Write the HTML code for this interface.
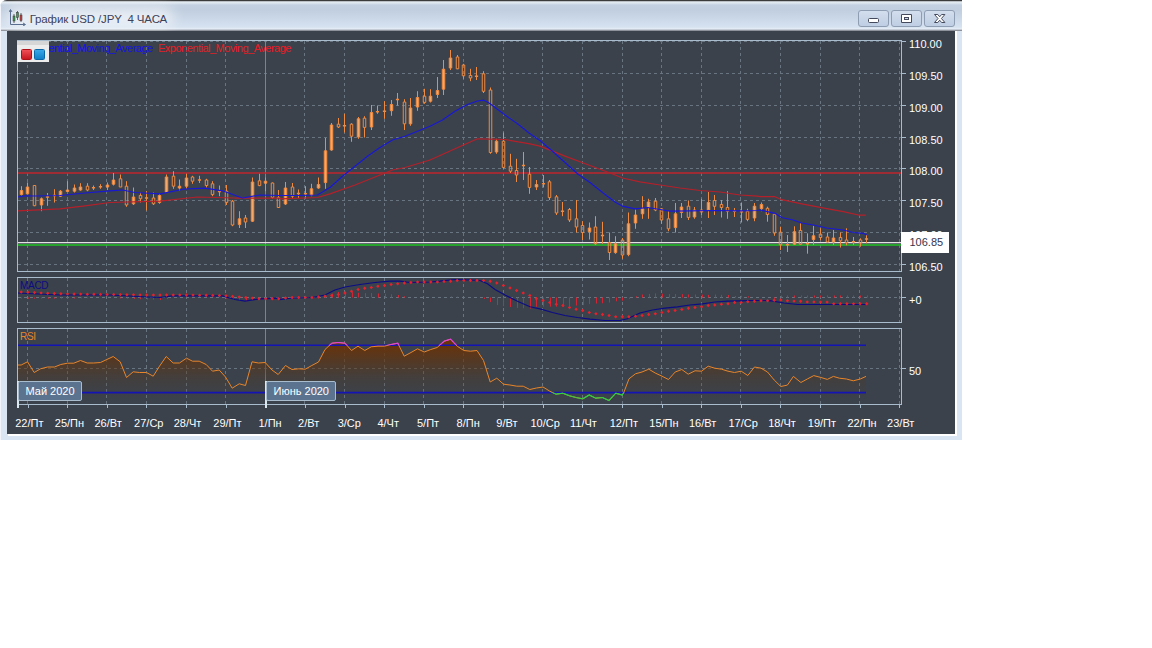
<!DOCTYPE html>
<html lang="ru"><head><meta charset="utf-8"><title>График USD/JPY</title>
<style>
html,body{margin:0;padding:0;background:#fff;}
body{width:1152px;height:648px;overflow:hidden;position:relative;font-family:"Liberation Sans",sans-serif;font-size:11px;}
.win{position:absolute;left:0;top:0;width:962px;height:439.8px;background:#d9e5f3;border-radius:7px 0 0 0;overflow:hidden;}
.tb{position:absolute;left:0;top:0;width:962px;height:31px;background:linear-gradient(#3b3b3b 0,#3b3b3b 1.2px,#e6ecf4 1.6px,#dee6ef 3px,#c3d0e1 5px,#c0cedf 10px,#cad7e7 18px,#d6e2f0 27px,#e8eff8 29.2px,#8d929b 30px,#8d929b 31px);}
.glow{position:absolute;left:6px;top:7px;width:168px;height:20px;background:#fff;opacity:0.62;filter:blur(7px);border-radius:10px;}
.edgeL{position:absolute;left:0;top:2px;width:1px;height:438px;background:#f1f5fb;}
.inner{position:absolute;left:7.5px;top:31px;width:949.7px;height:405.2px;background:#fff;}
.shl{position:absolute;left:6.7px;top:30px;width:1px;height:404px;background:#a3acb9;}
.dark{position:absolute;left:7.4px;top:31px;width:947.5px;height:402.8px;background:#3b424c;}
.title{position:absolute;left:29.7px;top:11.5px;font-size:11.5px;letter-spacing:-0.15px;line-height:14px;color:#3c4258;white-space:pre;}
.btn{position:absolute;top:10px;width:29px;height:15px;border:1px solid #8f9db3;border-radius:3px;background:linear-gradient(#d3deee,#bfcee3);box-sizing:content-box;}
.chart{position:absolute;left:0;top:0;}
.yl{position:absolute;left:909px;color:#fff;font-size:11px;line-height:14px;white-space:nowrap;}
.xl{position:absolute;top:416px;color:#fff;font-size:11px;line-height:14px;white-space:nowrap;}
.plab{position:absolute;left:901px;top:232px;width:48px;height:21px;background:#fff;color:#34344e;font-size:11px;line-height:21.6px;text-indent:8.5px;}
.mon{position:absolute;top:381px;height:18px;border:1px solid #a9bccd;border-radius:2px;background:#5c7390;color:#fff;font-size:11px;line-height:19px;padding-left:7px;box-sizing:content-box;}
.leg{position:absolute;left:16.5px;top:40.5px;width:32px;height:21.5px;background:linear-gradient(#d6d6d6 0,#d6d6d6 3.5px,#ececec 3.5px);}
.sq{position:absolute;top:8px;width:9px;height:9px;border-radius:1.5px;}
.lt{position:absolute;top:40.7px;font-size:11px;letter-spacing:-0.5px;line-height:14px;white-space:nowrap;}
.pl{position:absolute;font-size:10px;line-height:12px;letter-spacing:-0.3px;}
</style></head><body>
<div class="win">
<div class="tb"></div><div class="glow"></div><div class="edgeL"></div>
<div class="inner"></div><div class="shl"></div><div class="dark"></div>
<svg style="position:absolute;left:9px;top:9px" width="17" height="17" viewBox="0 0 17 17"><path d="M1.5 1v14.5H16M0 3l1.5-2.5L3 3M14 14l2.5 1.5L14 17" fill="none" stroke="#5a6f8f" stroke-width="1"/><path d="M5 5v9M8.5 2v9M12 4v9" stroke="#444" stroke-width="0.8"/><rect x="4" y="7" width="2" height="5" fill="#3a9a50" stroke="#333" stroke-width="0.5"/><rect x="7.5" y="3.5" width="2" height="5" fill="#3a9a50" stroke="#333" stroke-width="0.5"/><rect x="11" y="6" width="2" height="5.5" fill="#d04040" stroke="#333" stroke-width="0.5"/></svg>
<div class="title">График USD /JPY  4 ЧАСА</div>
<div class="btn" style="left:858px"></div><div class="btn" style="left:891px"></div><div class="btn" style="left:924px"></div>
<svg style="position:absolute;left:858px;top:10px" width="98" height="17" viewBox="858 10 98 17"><rect x="868.5" y="18.5" width="10" height="4" rx="1" fill="#fff" stroke="#444a5c" stroke-width="1"/><path d="M901.5 14.5h10v8h-10z" fill="#fff" stroke="#444a5c" stroke-width="1"/><rect x="904.5" y="17.5" width="4" height="2" fill="#cbd7e8" stroke="#444a5c" stroke-width="1"/><path d="M934.5 14.5h3.3l1.9 2.3 1.9-2.3h3.3l-3.5 4 3.5 4h-3.3l-1.9-2.3-1.9 2.3h-3.3l3.5-4z" fill="#fff" stroke="#444a5c" stroke-width="1" stroke-linejoin="round"/></svg>
<div class="lt" style="left:19.7px;color:#1414e0">Exponential_Moving_Average</div>
<div class="lt" style="left:158px;color:#e81c24">Exponential_Moving_Average</div>
<svg class="chart" width="962" height="440" viewBox="0 0 962 440">
<defs><linearGradient id="rg" x1="0" y1="345" x2="0" y2="404" gradientUnits="userSpaceOnUse"><stop offset="0" stop-color="#6a3208" stop-opacity="0.95"/><stop offset="0.3" stop-color="#603410" stop-opacity="0.62"/><stop offset="0.55" stop-color="#583618" stop-opacity="0.3"/><stop offset="0.8" stop-color="#50381e" stop-opacity="0.09"/><stop offset="1" stop-color="#4a3a2a" stop-opacity="0"/></linearGradient>
<clipPath id="c70"><rect x="0" y="320" width="962" height="25.2"/></clipPath><clipPath id="c30"><rect x="0" y="392.6" width="962" height="20"/></clipPath></defs>
<path d="M27.5 40.5V271.5M67.1 40.5V271.5M106.8 40.5V271.5M146.4 40.5V271.5M186.0 40.5V271.5M225.7 40.5V271.5M304.9 40.5V271.5M344.5 40.5V271.5M384.2 40.5V271.5M423.8 40.5V271.5M463.4 40.5V271.5M503.1 40.5V271.5M542.7 40.5V271.5M582.3 40.5V271.5M622.0 40.5V271.5M661.6 40.5V271.5M701.2 40.5V271.5M740.8 40.5V271.5M780.5 40.5V271.5M820.1 40.5V271.5M859.7 40.5V271.5M899.4 40.5V271.5M27.5 277.5V322.5M67.1 277.5V322.5M106.8 277.5V322.5M146.4 277.5V322.5M186.0 277.5V322.5M225.7 277.5V322.5M304.9 277.5V322.5M344.5 277.5V322.5M384.2 277.5V322.5M423.8 277.5V322.5M463.4 277.5V322.5M503.1 277.5V322.5M542.7 277.5V322.5M582.3 277.5V322.5M622.0 277.5V322.5M661.6 277.5V322.5M701.2 277.5V322.5M740.8 277.5V322.5M780.5 277.5V322.5M820.1 277.5V322.5M859.7 277.5V322.5M899.4 277.5V322.5M27.5 328.5V404.5M67.1 328.5V404.5M106.8 328.5V404.5M146.4 328.5V404.5M186.0 328.5V404.5M225.7 328.5V404.5M304.9 328.5V404.5M344.5 328.5V404.5M384.2 328.5V404.5M423.8 328.5V404.5M463.4 328.5V404.5M503.1 328.5V404.5M542.7 328.5V404.5M582.3 328.5V404.5M622.0 328.5V404.5M661.6 328.5V404.5M701.2 328.5V404.5M740.8 328.5V404.5M780.5 328.5V404.5M820.1 328.5V404.5M859.7 328.5V404.5M899.4 328.5V404.5M17.5 41.5H901.5M17.5 73.5H901.5M17.5 105.5H901.5M17.5 137.5H901.5M17.5 168.5H901.5M17.5 200.5H901.5M17.5 232.5H901.5M17.5 264.5H901.5M17.5 297.5H901.5M17.5 368.5H901.5" stroke="#68747f" stroke-width="1" stroke-dasharray="3 3" fill="none" shape-rendering="crispEdges"/>
<path d="M265.5 40.5V271.5" stroke="#6f8799" stroke-width="1" fill="none"/>
<path d="M265.5 277.5V322.5" stroke="#6f8799" stroke-width="1" fill="none"/>
<path d="M265.5 328.5V404.5" stroke="#6f8799" stroke-width="1" fill="none"/>
<polygon points="17.5,404 17.5,365.0 21.2,365.0 27.5,361.8 34.2,372.5 40.5,368.8 47.5,367.0 54.5,367.0 60.8,364.5 67.5,363.2 73.8,363.2 80.5,360.5 87.2,363.0 93.8,363.0 100.5,362.5 106.8,359.5 113.2,356.5 120.2,361.8 126.5,377.5 133.2,371.8 139.5,372.5 146.5,372.5 153.2,376.2 159.5,366.2 166.2,356.5 173.2,363.0 179.5,363.0 186.5,358.2 192.5,361.2 199.2,361.2 206.2,364.5 212.5,371.2 219.2,370.0 225.5,377.0 232.2,388.2 239.2,383.8 245.5,385.5 252.0,361.8 258.5,363.0 265.2,362.5 272.0,370.0 278.2,374.5 285.5,365.5 292.0,369.5 298.8,368.8 305.2,369.2 311.8,365.5 318.5,362.0 325.0,349.5 331.8,343.2 338.2,342.5 345.0,343.2 351.5,350.5 358.0,346.2 364.8,350.5 371.2,346.8 378.0,346.2 384.5,346.2 391.0,344.5 397.8,343.2 404.2,356.2 411.0,352.5 417.5,348.8 424.2,352.0 430.8,349.5 437.2,347.5 444.0,341.2 450.5,339.2 457.2,346.2 463.8,350.5 470.5,351.2 477.0,350.5 483.5,360.5 490.2,382.0 496.8,378.2 503.5,384.2 510.0,385.0 516.8,386.2 523.2,386.2 529.8,389.5 536.5,388.0 543.0,387.0 549.8,391.2 556.2,394.2 562.8,393.2 569.5,395.8 576.0,397.5 582.8,398.8 589.2,395.0 595.8,398.2 602.5,397.5 609.0,400.5 615.8,393.2 622.2,395.0 623.8,392.5 629.0,378.8 635.5,373.8 642.0,372.0 648.8,369.2 655.2,373.0 662.0,376.2 668.5,379.5 675.2,372.0 681.8,369.5 688.2,374.2 695.0,370.8 701.5,371.2 708.2,366.2 714.8,368.2 721.5,369.2 728.0,371.2 734.5,372.5 741.2,371.2 747.8,375.5 754.5,367.0 761.0,368.2 767.5,372.0 774.2,380.0 780.8,386.5 787.4,385.1 793.4,376.4 800.9,382.5 807.3,379.0 813.8,375.6 820.3,377.3 827.3,379.4 833.4,376.4 839.4,378.2 846.4,379.0 853.3,380.8 860.3,379.0 866.0,376.4 866.0,404" fill="url(#rg)"/>
<path d="M17.5 345.2H866M17.5 392.6H866" stroke="#1414b4" stroke-width="1.6" fill="none"/>
<polyline points="17.5,365.0 21.2,365.0 27.5,361.8 34.2,372.5 40.5,368.8 47.5,367.0 54.5,367.0 60.8,364.5 67.5,363.2 73.8,363.2 80.5,360.5 87.2,363.0 93.8,363.0 100.5,362.5 106.8,359.5 113.2,356.5 120.2,361.8 126.5,377.5 133.2,371.8 139.5,372.5 146.5,372.5 153.2,376.2 159.5,366.2 166.2,356.5 173.2,363.0 179.5,363.0 186.5,358.2 192.5,361.2 199.2,361.2 206.2,364.5 212.5,371.2 219.2,370.0 225.5,377.0 232.2,388.2 239.2,383.8 245.5,385.5 252.0,361.8 258.5,363.0 265.2,362.5 272.0,370.0 278.2,374.5 285.5,365.5 292.0,369.5 298.8,368.8 305.2,369.2 311.8,365.5 318.5,362.0 325.0,349.5 331.8,343.2 338.2,342.5 345.0,343.2 351.5,350.5 358.0,346.2 364.8,350.5 371.2,346.8 378.0,346.2 384.5,346.2 391.0,344.5 397.8,343.2 404.2,356.2 411.0,352.5 417.5,348.8 424.2,352.0 430.8,349.5 437.2,347.5 444.0,341.2 450.5,339.2 457.2,346.2 463.8,350.5 470.5,351.2 477.0,350.5 483.5,360.5 490.2,382.0 496.8,378.2 503.5,384.2 510.0,385.0 516.8,386.2 523.2,386.2 529.8,389.5 536.5,388.0 543.0,387.0 549.8,391.2 556.2,394.2 562.8,393.2 569.5,395.8 576.0,397.5 582.8,398.8 589.2,395.0 595.8,398.2 602.5,397.5 609.0,400.5 615.8,393.2 622.2,395.0 623.8,392.5 629.0,378.8 635.5,373.8 642.0,372.0 648.8,369.2 655.2,373.0 662.0,376.2 668.5,379.5 675.2,372.0 681.8,369.5 688.2,374.2 695.0,370.8 701.5,371.2 708.2,366.2 714.8,368.2 721.5,369.2 728.0,371.2 734.5,372.5 741.2,371.2 747.8,375.5 754.5,367.0 761.0,368.2 767.5,372.0 774.2,380.0 780.8,386.5 787.4,385.1 793.4,376.4 800.9,382.5 807.3,379.0 813.8,375.6 820.3,377.3 827.3,379.4 833.4,376.4 839.4,378.2 846.4,379.0 853.3,380.8 860.3,379.0 866.0,376.4" fill="none" stroke="#e8852a" stroke-width="1" stroke-linejoin="round"/>
<polyline points="17.5,365.0 21.2,365.0 27.5,361.8 34.2,372.5 40.5,368.8 47.5,367.0 54.5,367.0 60.8,364.5 67.5,363.2 73.8,363.2 80.5,360.5 87.2,363.0 93.8,363.0 100.5,362.5 106.8,359.5 113.2,356.5 120.2,361.8 126.5,377.5 133.2,371.8 139.5,372.5 146.5,372.5 153.2,376.2 159.5,366.2 166.2,356.5 173.2,363.0 179.5,363.0 186.5,358.2 192.5,361.2 199.2,361.2 206.2,364.5 212.5,371.2 219.2,370.0 225.5,377.0 232.2,388.2 239.2,383.8 245.5,385.5 252.0,361.8 258.5,363.0 265.2,362.5 272.0,370.0 278.2,374.5 285.5,365.5 292.0,369.5 298.8,368.8 305.2,369.2 311.8,365.5 318.5,362.0 325.0,349.5 331.8,343.2 338.2,342.5 345.0,343.2 351.5,350.5 358.0,346.2 364.8,350.5 371.2,346.8 378.0,346.2 384.5,346.2 391.0,344.5 397.8,343.2 404.2,356.2 411.0,352.5 417.5,348.8 424.2,352.0 430.8,349.5 437.2,347.5 444.0,341.2 450.5,339.2 457.2,346.2 463.8,350.5 470.5,351.2 477.0,350.5 483.5,360.5 490.2,382.0 496.8,378.2 503.5,384.2 510.0,385.0 516.8,386.2 523.2,386.2 529.8,389.5 536.5,388.0 543.0,387.0 549.8,391.2 556.2,394.2 562.8,393.2 569.5,395.8 576.0,397.5 582.8,398.8 589.2,395.0 595.8,398.2 602.5,397.5 609.0,400.5 615.8,393.2 622.2,395.0 623.8,392.5 629.0,378.8 635.5,373.8 642.0,372.0 648.8,369.2 655.2,373.0 662.0,376.2 668.5,379.5 675.2,372.0 681.8,369.5 688.2,374.2 695.0,370.8 701.5,371.2 708.2,366.2 714.8,368.2 721.5,369.2 728.0,371.2 734.5,372.5 741.2,371.2 747.8,375.5 754.5,367.0 761.0,368.2 767.5,372.0 774.2,380.0 780.8,386.5 787.4,385.1 793.4,376.4 800.9,382.5 807.3,379.0 813.8,375.6 820.3,377.3 827.3,379.4 833.4,376.4 839.4,378.2 846.4,379.0 853.3,380.8 860.3,379.0 866.0,376.4" fill="none" stroke="#e040e0" stroke-width="1.2" clip-path="url(#c70)"/>
<polyline points="17.5,365.0 21.2,365.0 27.5,361.8 34.2,372.5 40.5,368.8 47.5,367.0 54.5,367.0 60.8,364.5 67.5,363.2 73.8,363.2 80.5,360.5 87.2,363.0 93.8,363.0 100.5,362.5 106.8,359.5 113.2,356.5 120.2,361.8 126.5,377.5 133.2,371.8 139.5,372.5 146.5,372.5 153.2,376.2 159.5,366.2 166.2,356.5 173.2,363.0 179.5,363.0 186.5,358.2 192.5,361.2 199.2,361.2 206.2,364.5 212.5,371.2 219.2,370.0 225.5,377.0 232.2,388.2 239.2,383.8 245.5,385.5 252.0,361.8 258.5,363.0 265.2,362.5 272.0,370.0 278.2,374.5 285.5,365.5 292.0,369.5 298.8,368.8 305.2,369.2 311.8,365.5 318.5,362.0 325.0,349.5 331.8,343.2 338.2,342.5 345.0,343.2 351.5,350.5 358.0,346.2 364.8,350.5 371.2,346.8 378.0,346.2 384.5,346.2 391.0,344.5 397.8,343.2 404.2,356.2 411.0,352.5 417.5,348.8 424.2,352.0 430.8,349.5 437.2,347.5 444.0,341.2 450.5,339.2 457.2,346.2 463.8,350.5 470.5,351.2 477.0,350.5 483.5,360.5 490.2,382.0 496.8,378.2 503.5,384.2 510.0,385.0 516.8,386.2 523.2,386.2 529.8,389.5 536.5,388.0 543.0,387.0 549.8,391.2 556.2,394.2 562.8,393.2 569.5,395.8 576.0,397.5 582.8,398.8 589.2,395.0 595.8,398.2 602.5,397.5 609.0,400.5 615.8,393.2 622.2,395.0 623.8,392.5 629.0,378.8 635.5,373.8 642.0,372.0 648.8,369.2 655.2,373.0 662.0,376.2 668.5,379.5 675.2,372.0 681.8,369.5 688.2,374.2 695.0,370.8 701.5,371.2 708.2,366.2 714.8,368.2 721.5,369.2 728.0,371.2 734.5,372.5 741.2,371.2 747.8,375.5 754.5,367.0 761.0,368.2 767.5,372.0 774.2,380.0 780.8,386.5 787.4,385.1 793.4,376.4 800.9,382.5 807.3,379.0 813.8,375.6 820.3,377.3 827.3,379.4 833.4,376.4 839.4,378.2 846.4,379.0 853.3,380.8 860.3,379.0 866.0,376.4" fill="none" stroke="#30d040" stroke-width="1.2" clip-path="url(#c30)"/>
<path d="M21.5 297.5V298.7M28.5 297.5V298.7M34.5 297.5V298.7M41.5 297.5V298.7M48.5 297.5V298.7M54.5 297.5V298.7M61.5 297.5V298.7M67.5 297.5V298.6M74.5 297.5V298.5M81.5 297.5V298.4M87.5 297.5V298.3M120.5 297.5V298.4M127.5 297.5V298.7M134.5 297.5V298.9M140.5 297.5V299.2M147.5 297.5V299.5M153.5 297.5V299.7M160.5 297.5V300.0M167.5 297.5V299.1M226.5 297.5V298.5M233.5 297.5V299.9M239.5 297.5V300.8M246.5 297.5V301.1M252.5 297.5V299.4M285.5 297.5V298.3M325.5 297.5V296.2M332.5 297.5V293.7M338.5 297.5V292.0M345.5 297.5V291.5M352.5 297.5V292.2M358.5 297.5V292.8M365.5 297.5V293.1M371.5 297.5V293.0M378.5 297.5V293.5M385.5 297.5V293.7M391.5 297.5V294.3M398.5 297.5V295.0M404.5 297.5V296.3M451.5 297.5V296.3M457.5 297.5V296.6M484.5 297.5V299.0M490.5 297.5V302.1M497.5 297.5V305.0M503.5 297.5V306.2M510.5 297.5V307.0M517.5 297.5V307.9M523.5 297.5V308.3M530.5 297.5V308.6M536.5 297.5V306.8M543.5 297.5V306.7M550.5 297.5V306.7M556.5 297.5V306.7M563.5 297.5V307.0M569.5 297.5V306.2M576.5 297.5V305.5M583.5 297.5V305.2M589.5 297.5V304.1M596.5 297.5V303.5M602.5 297.5V303.3M609.5 297.5V302.5M616.5 297.5V301.3M622.5 297.5V300.7M629.5 297.5V298.9M636.5 297.5V296.3M642.5 297.5V294.5M649.5 297.5V293.9M655.5 297.5V293.4M662.5 297.5V293.7M669.5 297.5V294.1M675.5 297.5V294.0M682.5 297.5V294.2M688.5 297.5V294.5M695.5 297.5V294.5M702.5 297.5V294.6M708.5 297.5V294.9M715.5 297.5V294.5M721.5 297.5V294.9M728.5 297.5V295.0M735.5 297.5V296.0M741.5 297.5V295.7M748.5 297.5V296.3M774.5 297.5V298.7M781.5 297.5V295.5M787.5 297.5V295.5M794.5 297.5V295.5M801.5 297.5V295.5M807.5 297.5V295.5M814.5 297.5V295.5M820.5 297.5V295.5M827.5 297.5V295.5M834.5 297.5V295.5M840.5 297.5V295.5M847.5 297.5V295.5M853.5 297.5V295.5M860.5 297.5V295.5M867.5 297.5V295.5" stroke="#d42434" stroke-width="1" fill="none"/>
<polyline points="17.5,293.0 60.0,295.0 110.0,295.0 147.5,297.0 160.0,297.5 172.5,295.8 222.5,295.8 235.0,299.5 245.0,301.2 260.0,298.8 279.8,298.2 280.0,299.5 292.5,298.0 312.5,297.5 325.0,295.0 335.0,290.0 345.0,287.0 360.0,284.5 375.0,282.5 390.0,281.2 400.0,281.2 410.0,282.5 430.0,282.0 440.0,281.2 455.0,279.5 470.0,280.0 480.0,280.5 487.5,283.8 495.0,289.5 505.0,295.0 517.5,301.2 530.0,306.8 539.8,308.8 540.0,308.8 552.5,312.5 565.0,315.5 577.5,317.5 590.0,319.2 605.0,320.5 620.0,320.5 627.5,318.8 640.0,313.0 652.5,310.0 665.0,308.2 677.5,306.8 690.0,305.0 702.5,303.8 715.0,302.0 727.5,301.2 740.0,300.8 752.5,300.5 765.0,300.5 769.8,300.8 770.0,300.7 783.9,303.0 797.8,304.5 822.1,304.5 865.5,304.5" fill="none" stroke="#0c0c84" stroke-width="1.2"/>
<path d="M21.2 290.3l1.7 1.7l-1.7 1.7l-1.7 -1.7zM27.9 290.6l1.7 1.7l-1.7 1.7l-1.7 -1.7zM34.5 290.9l1.7 1.7l-1.7 1.7l-1.7 -1.7zM41.1 291.2l1.7 1.7l-1.7 1.7l-1.7 -1.7zM47.7 291.5l1.7 1.7l-1.7 1.7l-1.7 -1.7zM54.3 291.8l1.7 1.7l-1.7 1.7l-1.7 -1.7zM60.9 292.1l1.7 1.7l-1.7 1.7l-1.7 -1.7zM67.5 292.2l1.7 1.7l-1.7 1.7l-1.7 -1.7zM74.1 292.3l1.7 1.7l-1.7 1.7l-1.7 -1.7zM80.7 292.4l1.7 1.7l-1.7 1.7l-1.7 -1.7zM87.3 292.5l1.7 1.7l-1.7 1.7l-1.7 -1.7zM93.9 292.6l1.7 1.7l-1.7 1.7l-1.7 -1.7zM100.5 292.7l1.7 1.7l-1.7 1.7l-1.7 -1.7zM107.1 292.8l1.7 1.7l-1.7 1.7l-1.7 -1.7zM113.7 292.8l1.7 1.7l-1.7 1.7l-1.7 -1.7zM120.3 292.9l1.7 1.7l-1.7 1.7l-1.7 -1.7zM126.9 293.0l1.7 1.7l-1.7 1.7l-1.7 -1.7zM133.5 293.1l1.7 1.7l-1.7 1.7l-1.7 -1.7zM140.1 293.2l1.7 1.7l-1.7 1.7l-1.7 -1.7zM146.7 293.3l1.7 1.7l-1.7 1.7l-1.7 -1.7zM153.4 293.3l1.7 1.7l-1.7 1.7l-1.7 -1.7zM160.0 293.3l1.7 1.7l-1.7 1.7l-1.7 -1.7zM166.6 293.3l1.7 1.7l-1.7 1.7l-1.7 -1.7zM173.2 293.3l1.7 1.7l-1.7 1.7l-1.7 -1.7zM179.8 293.3l1.7 1.7l-1.7 1.7l-1.7 -1.7zM186.4 293.3l1.7 1.7l-1.7 1.7l-1.7 -1.7zM193.0 293.4l1.7 1.7l-1.7 1.7l-1.7 -1.7zM199.6 293.5l1.7 1.7l-1.7 1.7l-1.7 -1.7zM206.2 293.6l1.7 1.7l-1.7 1.7l-1.7 -1.7zM212.8 293.7l1.7 1.7l-1.7 1.7l-1.7 -1.7zM219.4 293.8l1.7 1.7l-1.7 1.7l-1.7 -1.7zM226.0 294.1l1.7 1.7l-1.7 1.7l-1.7 -1.7zM232.6 294.7l1.7 1.7l-1.7 1.7l-1.7 -1.7zM239.2 295.2l1.7 1.7l-1.7 1.7l-1.7 -1.7zM245.8 295.8l1.7 1.7l-1.7 1.7l-1.7 -1.7zM252.4 296.4l1.7 1.7l-1.7 1.7l-1.7 -1.7zM259.0 297.0l1.7 1.7l-1.7 1.7l-1.7 -1.7zM265.6 297.1l1.7 1.7l-1.7 1.7l-1.7 -1.7zM272.2 297.1l1.7 1.7l-1.7 1.7l-1.7 -1.7zM278.8 297.1l1.7 1.7l-1.7 1.7l-1.7 -1.7zM285.5 296.3l1.7 1.7l-1.7 1.7l-1.7 -1.7zM292.1 295.8l1.7 1.7l-1.7 1.7l-1.7 -1.7zM298.7 295.8l1.7 1.7l-1.7 1.7l-1.7 -1.7zM305.3 295.8l1.7 1.7l-1.7 1.7l-1.7 -1.7zM311.9 295.8l1.7 1.7l-1.7 1.7l-1.7 -1.7zM318.5 295.3l1.7 1.7l-1.7 1.7l-1.7 -1.7zM325.1 294.5l1.7 1.7l-1.7 1.7l-1.7 -1.7zM331.7 293.8l1.7 1.7l-1.7 1.7l-1.7 -1.7zM338.3 292.8l1.7 1.7l-1.7 1.7l-1.7 -1.7zM344.9 291.3l1.7 1.7l-1.7 1.7l-1.7 -1.7zM351.5 289.6l1.7 1.7l-1.7 1.7l-1.7 -1.7zM358.1 287.8l1.7 1.7l-1.7 1.7l-1.7 -1.7zM364.7 286.6l1.7 1.7l-1.7 1.7l-1.7 -1.7zM371.3 285.8l1.7 1.7l-1.7 1.7l-1.7 -1.7zM377.9 284.6l1.7 1.7l-1.7 1.7l-1.7 -1.7zM384.5 283.8l1.7 1.7l-1.7 1.7l-1.7 -1.7zM391.1 282.8l1.7 1.7l-1.7 1.7l-1.7 -1.7zM397.7 282.1l1.7 1.7l-1.7 1.7l-1.7 -1.7zM404.3 281.3l1.7 1.7l-1.7 1.7l-1.7 -1.7zM410.9 280.8l1.7 1.7l-1.7 1.7l-1.7 -1.7zM417.6 280.3l1.7 1.7l-1.7 1.7l-1.7 -1.7zM424.2 280.3l1.7 1.7l-1.7 1.7l-1.7 -1.7zM430.8 280.3l1.7 1.7l-1.7 1.7l-1.7 -1.7zM437.4 280.3l1.7 1.7l-1.7 1.7l-1.7 -1.7zM444.0 279.8l1.7 1.7l-1.7 1.7l-1.7 -1.7zM450.6 279.5l1.7 1.7l-1.7 1.7l-1.7 -1.7zM457.2 278.8l1.7 1.7l-1.7 1.7l-1.7 -1.7zM463.8 278.8l1.7 1.7l-1.7 1.7l-1.7 -1.7zM470.4 278.8l1.7 1.7l-1.7 1.7l-1.7 -1.7zM477.0 278.8l1.7 1.7l-1.7 1.7l-1.7 -1.7zM483.6 278.8l1.7 1.7l-1.7 1.7l-1.7 -1.7zM490.2 279.5l1.7 1.7l-1.7 1.7l-1.7 -1.7zM496.8 281.3l1.7 1.7l-1.7 1.7l-1.7 -1.7zM503.4 283.8l1.7 1.7l-1.7 1.7l-1.7 -1.7zM510.0 286.3l1.7 1.7l-1.7 1.7l-1.7 -1.7zM516.6 288.8l1.7 1.7l-1.7 1.7l-1.7 -1.7zM523.2 291.3l1.7 1.7l-1.7 1.7l-1.7 -1.7zM529.8 293.8l1.7 1.7l-1.7 1.7l-1.7 -1.7zM536.4 297.0l1.7 1.7l-1.7 1.7l-1.7 -1.7zM543.0 298.8l1.7 1.7l-1.7 1.7l-1.7 -1.7zM549.7 300.8l1.7 1.7l-1.7 1.7l-1.7 -1.7zM556.3 302.6l1.7 1.7l-1.7 1.7l-1.7 -1.7zM562.9 303.8l1.7 1.7l-1.7 1.7l-1.7 -1.7zM569.5 305.8l1.7 1.7l-1.7 1.7l-1.7 -1.7zM576.1 307.6l1.7 1.7l-1.7 1.7l-1.7 -1.7zM582.7 308.8l1.7 1.7l-1.7 1.7l-1.7 -1.7zM589.3 310.8l1.7 1.7l-1.7 1.7l-1.7 -1.7zM595.9 312.1l1.7 1.7l-1.7 1.7l-1.7 -1.7zM602.5 312.8l1.7 1.7l-1.7 1.7l-1.7 -1.7zM609.1 313.8l1.7 1.7l-1.7 1.7l-1.7 -1.7zM615.7 315.0l1.7 1.7l-1.7 1.7l-1.7 -1.7zM622.3 315.1l1.7 1.7l-1.7 1.7l-1.7 -1.7zM628.9 315.1l1.7 1.7l-1.7 1.7l-1.7 -1.7zM635.5 314.5l1.7 1.7l-1.7 1.7l-1.7 -1.7zM642.1 313.8l1.7 1.7l-1.7 1.7l-1.7 -1.7zM648.7 312.8l1.7 1.7l-1.7 1.7l-1.7 -1.7zM655.3 312.0l1.7 1.7l-1.7 1.7l-1.7 -1.7zM661.9 310.8l1.7 1.7l-1.7 1.7l-1.7 -1.7zM668.5 309.5l1.7 1.7l-1.7 1.7l-1.7 -1.7zM675.1 308.8l1.7 1.7l-1.7 1.7l-1.7 -1.7zM681.8 307.8l1.7 1.7l-1.7 1.7l-1.7 -1.7zM688.4 306.5l1.7 1.7l-1.7 1.7l-1.7 -1.7zM695.0 305.8l1.7 1.7l-1.7 1.7l-1.7 -1.7zM701.6 305.0l1.7 1.7l-1.7 1.7l-1.7 -1.7zM708.2 303.8l1.7 1.7l-1.7 1.7l-1.7 -1.7zM714.8 303.3l1.7 1.7l-1.7 1.7l-1.7 -1.7zM721.4 302.6l1.7 1.7l-1.7 1.7l-1.7 -1.7zM728.0 302.1l1.7 1.7l-1.7 1.7l-1.7 -1.7zM734.6 300.8l1.7 1.7l-1.7 1.7l-1.7 -1.7zM741.2 300.8l1.7 1.7l-1.7 1.7l-1.7 -1.7zM747.8 300.0l1.7 1.7l-1.7 1.7l-1.7 -1.7zM754.4 299.6l1.7 1.7l-1.7 1.7l-1.7 -1.7zM761.0 299.1l1.7 1.7l-1.7 1.7l-1.7 -1.7zM767.6 299.0l1.7 1.7l-1.7 1.7l-1.7 -1.7zM774.2 298.6l1.7 1.7l-1.7 1.7l-1.7 -1.7zM780.8 298.2l1.7 1.7l-1.7 1.7l-1.7 -1.7zM787.4 299.0l1.7 1.7l-1.7 1.7l-1.7 -1.7zM794.0 299.4l1.7 1.7l-1.7 1.7l-1.7 -1.7zM800.6 299.5l1.7 1.7l-1.7 1.7l-1.7 -1.7zM807.2 300.2l1.7 1.7l-1.7 1.7l-1.7 -1.7zM813.9 300.2l1.7 1.7l-1.7 1.7l-1.7 -1.7zM820.5 300.4l1.7 1.7l-1.7 1.7l-1.7 -1.7zM827.1 300.4l1.7 1.7l-1.7 1.7l-1.7 -1.7zM833.7 302.0l1.7 1.7l-1.7 1.7l-1.7 -1.7zM840.3 302.0l1.7 1.7l-1.7 1.7l-1.7 -1.7zM846.9 302.0l1.7 1.7l-1.7 1.7l-1.7 -1.7zM853.5 302.0l1.7 1.7l-1.7 1.7l-1.7 -1.7zM860.1 302.0l1.7 1.7l-1.7 1.7l-1.7 -1.7zM866.7 302.0l1.7 1.7l-1.7 1.7l-1.7 -1.7z" fill="#e8202c"/>
<path d="M17.5 173H901.5" stroke="#bf262e" stroke-width="1.4" fill="none"/>
<path d="M17.5 242.6H901.5" stroke="#e2e2e2" stroke-width="1.2" fill="none"/>
<path d="M17.5 245H901.5" stroke="#22c322" stroke-width="1.5" fill="none"/>
<path d="M21.5 186.2V195.5M27.5 182.5V194.5M34.5 185.5V185.5M34.5 205.8V206.2M41.5 197.5V211.2M47.5 193.0V205.8M54.5 189.2V202.5M60.5 190.0V197.0M67.5 181.2V192.0M74.5 184.5V192.5M80.5 183.2V190.8M87.5 183.2V186.2M87.5 190.0V191.2M93.5 185.5V190.0M100.5 184.2V188.8M107.5 182.5V190.0M113.5 173.0V185.5M120.5 174.5V178.8M120.5 187.0V187.0M126.5 181.2V186.2M126.5 205.0V206.8M133.5 187.5V205.0M140.5 192.5V195.5M140.5 198.8V202.5M146.5 191.2V210.5M153.5 192.5V198.0M153.5 203.8V205.0M159.5 193.8V203.8M166.5 174.5V192.5M173.5 171.2V176.2M173.5 186.2V188.8M179.5 179.5V190.8M186.5 173.8V188.8M192.5 175.8V177.0M192.5 181.2V183.8M199.5 175.8V183.0M206.5 178.8V180.0M206.5 185.5V187.5M212.5 181.2V183.8M212.5 194.5V196.2M219.5 185.5V196.2M226.5 185.0V191.2M226.5 202.5V205.0M232.5 200.0V201.2M232.5 225.0V226.2M239.5 211.2V228.0M245.5 215.0V218.0M245.5 222.0V228.0M252.5 177.5V222.0M259.5 173.8V180.8M259.5 185.5V186.2M265.5 177.5V191.2M272.5 182.5V183.0M272.5 197.5V198.8M278.5 190.0V197.5M278.5 207.5V208.0M285.5 182.0V205.0M292.5 183.0V187.0M292.5 196.2V198.0M298.5 189.5V198.0M305.5 186.2V198.8M311.5 183.8V196.2M318.5 177.5V188.8M325.5 138.0V188.8M331.5 123.0V150.8M338.5 118.0V124.2M338.5 127.0V128.0M344.5 113.8V132.5M351.5 123.2V124.2M351.5 136.2V141.8M358.5 117.0V138.8M364.5 116.2V118.2M364.5 127.5V137.5M371.5 105.0V130.0M377.5 105.5V113.8M384.5 101.2V118.8M391.5 100.0V115.8M397.5 93.0V105.5M404.5 99.2V102.0M404.5 123.8V130.0M410.5 98.0V125.8M417.5 91.2V110.8M424.5 88.8V96.2M424.5 102.5V103.8M430.5 89.2V102.5M437.5 77.0V98.0M443.5 60.0V95.0M450.5 50.0V70.0M457.5 55.0V57.0M457.5 68.8V69.2M463.5 63.8V65.0M463.5 75.8V78.8M470.5 68.8V75.5M470.5 78.0V81.2M476.5 67.0V80.0M483.5 71.2V73.8M483.5 91.2V93.0M490.5 87.5V90.0M490.5 152.5V153.8M496.5 138.8V153.8M503.5 132.5V141.2M503.5 167.5V168.8M510.5 153.8V166.2M510.5 171.2V173.0M516.5 158.8V170.5M516.5 175.0V182.0M523.5 152.0V180.0M529.5 167.0V174.2M529.5 187.5V193.8M536.5 180.0V190.0M543.5 175.0V187.5M549.5 180.0V181.8M549.5 197.5V200.0M556.5 195.0V196.8M556.5 213.0V215.0M562.5 202.0V216.2M569.5 208.0V209.5M569.5 220.0V222.0M576.5 200.0V218.8M576.5 227.0V232.5M582.5 221.2V225.5M582.5 232.5V240.0M589.5 222.5V239.5M595.5 216.2V227.0M595.5 243.8V245.0M602.5 221.8V243.8M609.5 232.5V242.5M609.5 252.5V260.0M615.5 236.2V253.8M622.5 238.0V240.0M622.5 255.0V258.8M628.5 212.5V256.2M635.5 209.5V228.8M642.5 196.2V218.8M648.5 198.8V218.8M655.5 198.0V201.2M655.5 210.0V211.2M661.5 208.0V208.8M661.5 220.0V223.8M668.5 211.2V218.8M668.5 228.8V231.2M675.5 203.0V232.5M681.5 203.0V218.0M688.5 200.5V206.2M688.5 217.5V220.0M694.5 207.0V218.8M701.5 198.8V215.0M708.5 192.0V218.0M714.5 195.0V200.5M714.5 206.2V215.0M721.5 200.0V204.5M721.5 207.5V217.5M727.5 191.2V207.5M727.5 211.2V218.8M734.5 208.0V217.0M741.5 202.5V222.5M747.5 208.8V211.2M747.5 219.5V221.2M754.5 203.0V221.2M761.5 202.5V211.2M767.5 206.7V208.3M767.5 214.5V221.7M774.5 213.3V214.2M774.5 233.0V235.8M780.5 226.7V232.2M780.5 244.7V250.0M787.5 235.0V252.0M794.5 226.3V245.0M800.5 223.3V230.5M800.5 244.2V245.0M807.5 233.3V253.7M813.5 225.8V245.0M820.5 228.3V234.2M820.5 237.5V240.3M827.5 232.5V237.0M827.5 242.0V242.5M833.5 230.0V245.0M840.5 232.5V237.5M840.5 240.8V247.5M846.5 228.3V240.0M846.5 242.5V245.3M853.5 237.0V245.0M860.5 238.3V240.0M860.5 243.0V246.7M866.5 235.0V243.3" stroke="#f08a40" stroke-width="1" fill="none"/>
<path d="M33.25 185.5h2.5v20.2h-2.5zM86.25 186.2h2.5v3.8h-2.5zM119.25 178.8h2.5v8.2h-2.5zM125.25 186.2h2.5v18.8h-2.5zM139.25 195.5h2.5v3.2h-2.5zM152.25 198.0h2.5v5.8h-2.5zM172.25 176.2h2.5v10.0h-2.5zM191.25 177.0h2.5v4.2h-2.5zM205.25 180.0h2.5v5.5h-2.5zM211.25 183.8h2.5v10.8h-2.5zM225.25 191.2h2.5v11.2h-2.5zM231.25 201.2h2.5v23.8h-2.5zM244.25 218.0h2.5v4.0h-2.5zM258.25 180.8h2.5v4.8h-2.5zM271.25 183.0h2.5v14.5h-2.5zM277.25 197.5h2.5v10.0h-2.5zM291.25 187.0h2.5v9.2h-2.5zM337.25 124.2h2.5v2.8h-2.5zM350.25 124.2h2.5v12.0h-2.5zM363.25 118.2h2.5v9.2h-2.5zM403.25 102.0h2.5v21.8h-2.5zM423.25 96.2h2.5v6.2h-2.5zM456.25 57.0h2.5v11.8h-2.5zM462.25 65.0h2.5v10.8h-2.5zM469.25 75.5h2.5v2.5h-2.5zM482.25 73.8h2.5v17.5h-2.5zM489.25 90.0h2.5v62.5h-2.5zM502.25 141.2h2.5v26.2h-2.5zM509.25 166.2h2.5v5.0h-2.5zM515.25 170.5h2.5v4.5h-2.5zM528.25 174.2h2.5v13.2h-2.5zM548.25 181.8h2.5v15.8h-2.5zM555.25 196.8h2.5v16.2h-2.5zM568.25 209.5h2.5v10.5h-2.5zM575.25 218.8h2.5v8.2h-2.5zM581.25 225.5h2.5v7.0h-2.5zM594.25 227.0h2.5v16.8h-2.5zM608.25 242.5h2.5v10.0h-2.5zM621.25 240.0h2.5v15.0h-2.5zM654.25 201.2h2.5v8.8h-2.5zM660.25 208.8h2.5v11.2h-2.5zM667.25 218.8h2.5v10.0h-2.5zM687.25 206.2h2.5v11.2h-2.5zM713.25 200.5h2.5v5.8h-2.5zM720.25 204.5h2.5v3.0h-2.5zM726.25 207.5h2.5v3.8h-2.5zM746.25 211.2h2.5v8.2h-2.5zM766.25 208.3h2.5v6.2h-2.5zM773.25 214.2h2.5v18.8h-2.5zM779.25 232.2h2.5v12.5h-2.5zM799.25 230.5h2.5v13.7h-2.5zM819.25 234.2h2.5v3.3h-2.5zM826.25 237.0h2.5v5.0h-2.5zM839.25 237.5h2.5v3.3h-2.5zM845.25 240.0h2.5v2.5h-2.5zM859.25 240.0h2.5v3.0h-2.5z" stroke="#f08a40" stroke-width="1" fill="none"/>
<path d="M20.25 190.5h2.5v4.0h-2.5zM26.25 187.0h2.5v6.8h-2.5zM40.25 198.8h2.5v6.2h-2.5zM59.25 191.2h2.5v5.0h-2.5zM66.25 190.0h2.5v1.5h-2.5zM73.25 188.0h2.5v3.2h-2.5zM79.25 187.0h2.5v3.0h-2.5zM106.25 185.0h2.5v2.0h-2.5zM112.25 180.0h2.5v4.2h-2.5zM132.25 197.0h2.5v6.8h-2.5zM158.25 195.5h2.5v7.0h-2.5zM165.25 177.0h2.5v15.5h-2.5zM178.25 186.2h2.5v1.8h-2.5zM185.25 178.0h2.5v8.2h-2.5zM238.25 218.8h2.5v5.8h-2.5zM251.25 182.0h2.5v39.2h-2.5zM264.25 181.2h2.5v2.0h-2.5zM284.25 188.0h2.5v16.0h-2.5zM310.25 188.8h2.5v6.2h-2.5zM317.25 184.5h2.5v3.5h-2.5zM324.25 150.8h2.5v31.8h-2.5zM330.25 125.0h2.5v25.0h-2.5zM357.25 118.8h2.5v18.2h-2.5zM370.25 112.5h2.5v14.5h-2.5zM390.25 104.5h2.5v6.2h-2.5zM409.25 108.0h2.5v15.8h-2.5zM416.25 97.5h2.5v9.5h-2.5zM429.25 96.2h2.5v5.0h-2.5zM436.25 90.5h2.5v4.0h-2.5zM442.25 69.2h2.5v20.0h-2.5zM449.25 58.0h2.5v10.0h-2.5zM495.25 141.2h2.5v10.8h-2.5zM535.25 184.5h2.5v2.5h-2.5zM588.25 228.0h2.5v3.8h-2.5zM614.25 243.8h2.5v8.8h-2.5zM627.25 223.8h2.5v30.8h-2.5zM634.25 215.0h2.5v8.0h-2.5zM641.25 208.8h2.5v5.0h-2.5zM647.25 202.0h2.5v5.5h-2.5zM674.25 213.8h2.5v13.8h-2.5zM680.25 207.0h2.5v5.5h-2.5zM693.25 210.0h2.5v7.0h-2.5zM700.25 210.0h2.5v2.0h-2.5zM707.25 202.5h2.5v7.5h-2.5zM753.25 206.2h2.5v11.8h-2.5zM760.25 204.5h2.5v4.2h-2.5zM793.25 231.7h2.5v12.5h-2.5zM812.25 235.8h2.5v3.8h-2.5zM832.25 238.0h2.5v4.0h-2.5z" stroke="#f08a40" stroke-width="1" fill="#f6a868"/>
<path d="M45.9 197.0h3.2M52.9 195.5h3.2M91.9 187.8h3.2M98.9 186.8h3.2M144.9 198.0h3.2M197.9 180.0h3.2M217.9 191.4h3.2M296.9 193.5h3.2M303.9 193.8h3.2M342.9 125.8h3.2M375.9 111.8h3.2M382.9 111.2h3.2M395.9 99.5h3.2M474.9 76.2h3.2M521.9 165.5h3.2M541.9 183.8h3.2M560.9 211.2h3.2M600.9 235.5h3.2M732.9 211.2h3.2M739.9 211.8h3.2M785.9 244.7h3.2M805.9 243.8h3.2M851.9 241.7h3.2M864.9 239.0h3.2" stroke="#f08a40" stroke-width="1.6" fill="none"/>
<polyline points="17.5,210.8 60.0,208.8 85.0,205.8 110.0,202.5 160.0,201.2 197.5,197.0 235.0,198.0 279.8,198.0 280.0,198.8 317.5,197.5 330.0,193.8 355.0,185.0 380.0,175.0 392.5,170.0 405.0,167.5 430.0,160.0 455.0,148.8 477.5,138.8 505.0,139.5 530.0,143.8 539.8,146.2 540.0,146.2 565.0,156.2 590.0,165.5 610.0,173.0 622.5,178.0 640.0,181.8 660.0,185.0 680.0,188.0 700.0,190.5 720.0,192.0 740.0,195.0 757.5,196.2 760.0,196.7 775.0,196.7 781.7,199.7 801.7,203.8 826.7,208.7 843.3,211.7 858.3,215.0 865.8,215.0" fill="none" stroke="#b4202a" stroke-width="1.25" stroke-linejoin="round"/>
<polyline points="17.5,197.0 25.0,195.8 35.0,196.0 60.0,195.5 85.0,193.0 110.0,190.8 122.5,190.0 135.0,192.5 160.0,193.8 185.0,189.0 205.0,188.2 222.5,190.8 242.5,198.0 260.0,195.0 279.8,195.5 280.0,195.5 300.0,195.5 317.5,195.0 330.0,187.5 342.5,176.2 355.0,166.2 367.5,156.2 380.0,147.5 392.5,140.0 405.0,136.2 417.5,131.2 430.0,126.2 442.5,120.0 455.0,111.2 467.5,104.5 477.5,101.0 483.8,100.2 487.5,102.0 492.5,105.5 505.0,115.0 517.5,123.8 530.0,133.8 539.8,140.5 540.0,140.5 552.5,151.2 565.0,162.5 577.5,173.8 590.0,182.5 602.5,192.5 615.0,202.0 622.5,206.2 635.0,208.8 647.5,207.5 660.0,209.5 670.0,211.2 690.0,210.8 715.0,210.5 740.0,210.8 757.5,210.5 760.0,210.0 775.0,213.3 781.7,217.5 793.3,220.0 801.7,223.0 813.3,225.0 826.7,228.0 843.3,230.0 853.3,232.5 863.3,233.3 866.7,235.0" fill="none" stroke="#1818d4" stroke-width="1.2" stroke-linejoin="round"/>
<rect x="17.5" y="40.5" width="884.0" height="231.0" fill="none" stroke="#a9bccd" stroke-width="1" shape-rendering="crispEdges"/>
<rect x="17.5" y="277.5" width="884.0" height="45.0" fill="none" stroke="#a9bccd" stroke-width="1" shape-rendering="crispEdges"/>
<rect x="17.5" y="328.5" width="884.0" height="76.0" fill="none" stroke="#a9bccd" stroke-width="1" shape-rendering="crispEdges"/>
<path d="M901.5 41.5h4M901.5 73.5h4M901.5 105.5h4M901.5 137.5h4M901.5 168.5h4M901.5 200.5h4M901.5 232.5h4M901.5 264.5h4M901.5 297.5h4M901.5 368.5h4M28.5 404.5v3.5M67.5 404.5v3.5M107.5 404.5v3.5M146.5 404.5v3.5M186.5 404.5v3.5M226.5 404.5v3.5M265.5 404.5v3.5M305.5 404.5v3.5M345.5 404.5v3.5M384.5 404.5v3.5M424.5 404.5v3.5M463.5 404.5v3.5M503.5 404.5v3.5M543.5 404.5v3.5M582.5 404.5v3.5M622.5 404.5v3.5M662.5 404.5v3.5M701.5 404.5v3.5M741.5 404.5v3.5M780.5 404.5v3.5M820.5 404.5v3.5M860.5 404.5v3.5M899.5 404.5v3.5" stroke="#a9bccd" stroke-width="1" fill="none" shape-rendering="crispEdges"/>
<path d="M18 381V408M266.0 381V408" stroke="#d8e8ee" stroke-width="2" fill="none"/>
</svg>
<div class="leg"><div class="sq" style="left:4.7px;background:linear-gradient(#f05058,#c81820);border:0.5px solid #b01018"></div><div class="sq" style="left:17.7px;background:linear-gradient(#38a8e8,#1080c8);border:0.5px solid #0868a8"></div></div>
<div class="pl" style="left:20px;top:279.5px;color:#0c0c84">MACD</div>
<div class="pl" style="left:20px;top:330.5px;color:#e8852a">RSI</div>
<div class="yl" style="top:36.9px">110.00</div>
<div class="yl" style="top:68.9px">109.50</div>
<div class="yl" style="top:100.9px">109.00</div>
<div class="yl" style="top:132.9px">108.50</div>
<div class="yl" style="top:163.9px">108.00</div>
<div class="yl" style="top:195.9px">107.50</div>
<div class="yl" style="top:227.9px">107.00</div>
<div class="yl" style="top:259.9px">106.50</div>
<div class="yl" style="top:293px">+0</div>
<div class="yl" style="top:363.8px">50</div>
<div class="xl" style="left:15.2px">22/Пт</div>
<div class="xl" style="left:54.8px">25/Пн</div>
<div class="xl" style="left:94.5px">26/Вт</div>
<div class="xl" style="left:134.1px">27/Ср</div>
<div class="xl" style="left:173.7px">28/Чт</div>
<div class="xl" style="left:213.3px">29/Пт</div>
<div class="xl" style="left:258.5px">1/Пн</div>
<div class="xl" style="left:298.1px">2/Вт</div>
<div class="xl" style="left:337.7px">3/Ср</div>
<div class="xl" style="left:377.4px">4/Чт</div>
<div class="xl" style="left:417.0px">5/Пт</div>
<div class="xl" style="left:456.6px">8/Пн</div>
<div class="xl" style="left:496.3px">9/Вт</div>
<div class="xl" style="left:530.4px">10/Ср</div>
<div class="xl" style="left:570.0px">11/Чт</div>
<div class="xl" style="left:609.7px">12/Пт</div>
<div class="xl" style="left:649.3px">15/Пн</div>
<div class="xl" style="left:688.9px">16/Вт</div>
<div class="xl" style="left:728.5px">17/Ср</div>
<div class="xl" style="left:768.2px">18/Чт</div>
<div class="xl" style="left:807.8px">19/Пт</div>
<div class="xl" style="left:847.4px">22/Пн</div>
<div class="xl" style="left:887.1px">23/Вт</div>
<div class="plab">106.85</div>
<div class="mon" style="left:17.5px;width:55.5px">Май 2020</div>
<div class="mon" style="left:265.5px;width:61.5px">Июнь 2020</div>
</div>
</body></html>
